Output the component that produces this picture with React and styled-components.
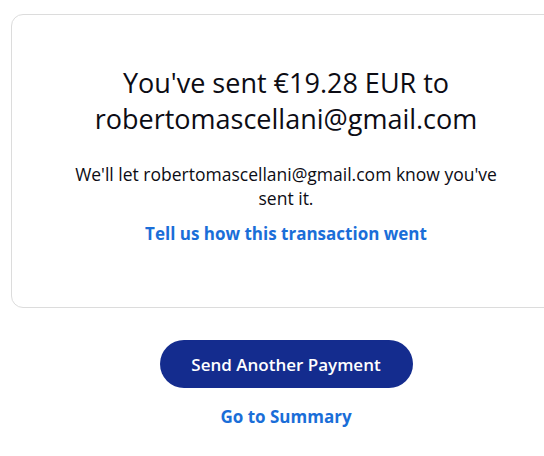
import React from "react";
import styled, { createGlobalStyle } from "styled-components";

const Global = createGlobalStyle`
  html, body { margin: 0; padding: 0; background: #ffffff; overflow: hidden; }
  body { font-family: "Open Sans", Lato, sans-serif; color: #001435; }
`;

const Page = styled.div`
  width: 550px;
  margin: 14px 0 0 11px;
  display: flex;
  flex-direction: column;
  align-items: center;
`;

const Card = styled.section`
  box-sizing: border-box;
  width: 100%;
  height: 294px;
  border: 1px solid #dcdcdc;
  border-radius: 12px;
  padding: 50px 40px 0;
  display: flex;
  flex-direction: column;
  align-items: center;
  text-align: center;
`;

const Heading = styled.h1`
  margin: 0;
  font-size: 27px;
  line-height: 36px;
  font-weight: 400;
  color: #0c0c14;
`;

const Message = styled.p`
  margin: 25px 0 0;
  max-width: 432px;
  font-size: 17.5px;
  line-height: 24px;
  color: #0c0c14;
`;

const TextLink = styled.a`
  display: block;
  margin-top: ${(p) => p.$top}px;
  font-size: 17px;
  line-height: 24px;
  font-weight: 700;
  color: #1a6ed8;
  text-decoration: none;
  cursor: pointer;
`;

const PrimaryButton = styled.button`
  margin-top: 32px;
  width: 253px;
  height: 48px;
  border: none;
  border-radius: 24px;
  background: #142c8e;
  color: #ffffff;
  font-family: inherit;
  font-size: 17px;
  font-weight: 600;
  cursor: pointer;
`;

export default function App() {
  return (
    <>
      <Global />
      <Page>
        <Card>
          <Heading>
            You've sent €19.28 EUR to
            <br />
            robertomascellani@gmail.com
          </Heading>
          <Message>
            We'll let robertomascellani@gmail.com know you've sent it.
          </Message>
          <TextLink $top={12}>Tell us how this transaction went</TextLink>
        </Card>
        <PrimaryButton>Send Another Payment</PrimaryButton>
        <TextLink $top={17}>Go to Summary</TextLink>
      </Page>
    </>
  );
}
